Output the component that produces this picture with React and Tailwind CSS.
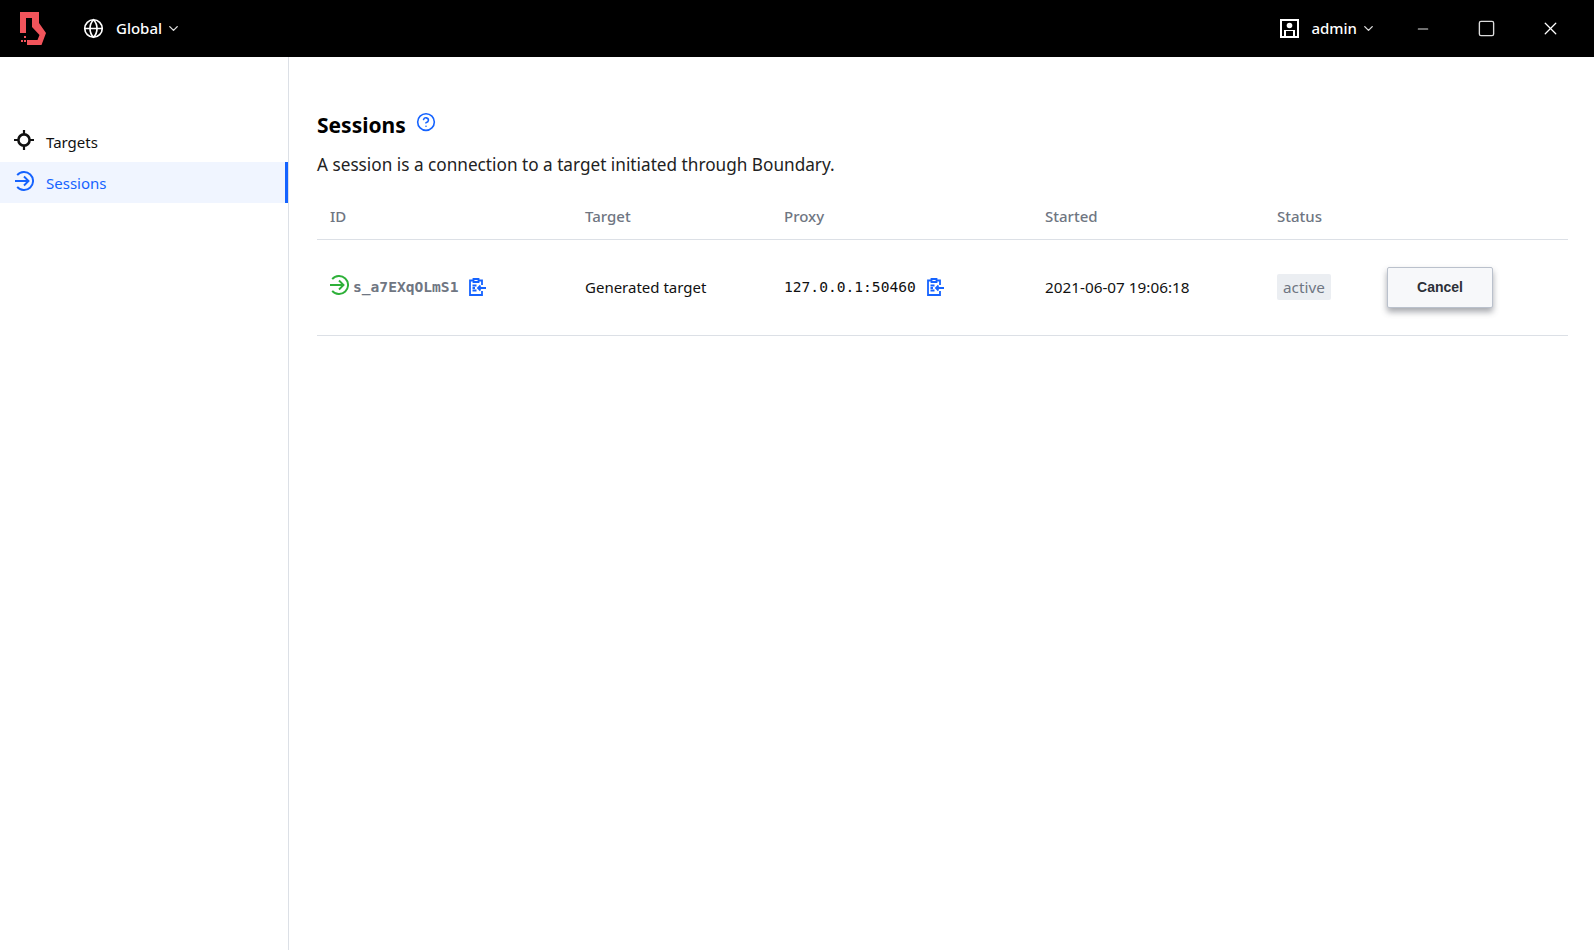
import { ChevronDown, Globe, CircleHelp, Minus, Square, X } from 'lucide-react';

const uiFont = 'font-["Noto_Sans",sans-serif]';
const monoFont = 'font-["DejaVu_Sans_Mono",monospace]';

function Logo() {
  return (
    <svg width="26" height="33" viewBox="0 0 26 33" fill="none">
      <path
        d="M0 0H19V11L26 21L21.5 33H7V28H17.5L19.5 23L12 15V6H6V21H0Z"
        fill="#f2545b"
      />
      <rect x="4" y="24" width="2" height="2" fill="#f2545b" />
      <rect x="1" y="28" width="2" height="2" fill="#f2545b" />
      <rect x="4" y="28" width="2" height="2" fill="#f2545b" />
    </svg>
  );
}

function UserIcon() {
  return (
    <svg width="19" height="19" viewBox="0 0 19 19">
      <path fillRule="evenodd" d="M0 0H19V19H0ZM2 2V17H4V11H15V17H17V2Z" fill="#fff" />
      <circle cx="9.5" cy="6.5" r="2.8" fill="#fff" />
      <rect x="6" y="12" width="7" height="5" fill="#000" />
    </svg>
  );
}

function TargetIcon({ className }) {
  return (
    <svg width="20" height="20" viewBox="0 0 20 20" fill="none" stroke="currentColor" strokeWidth="2.6" className={className}>
      <circle cx="10" cy="10" r="5.6" />
      <path d="M10 0V5M10 15V20M0 10H5M15 10H20" strokeWidth="2.2" />
    </svg>
  );
}

function SessionIcon({ className }) {
  return (
    <svg width="20" height="20" viewBox="0 0 20 20" fill="none" stroke="currentColor" strokeWidth="1.9" className={className}>
      <path d="M3.2 4.2A9 9 0 1 1 3.2 15.8" />
      <path d="M1 10H14.5M10 5.5L14.5 10L10 14.5" />
    </svg>
  );
}

function CopyIcon() {
  return (
    <svg width="17" height="18" viewBox="0 0 17 18" fill="none" stroke="#1563ff" strokeWidth="1.8">
      <path d="M4.5 2.5H1V17H13V13M10 2.5H13V7" />
      <path d="M4.5 1H9.5V4H4.5Z" />
      <path d="M3.5 7.5H7.5M3.5 10H6M3.5 12.5H7.5M17 10H9M11.5 7.5L9 10L11.5 12.5" />
    </svg>
  );
}

function NavItem({ icon: Icon, active, children }) {
  return (
    <div
      className={`flex h-[41px] items-center border-r-[3px] pl-[14px] ${
        active ? 'border-[#1563ff] bg-[#f0f5ff] text-[#1563ff]' : 'border-transparent text-[#111]'
      }`}
    >
      <Icon className="-mt-1" />
      <span className="ml-[12px] pt-[2px] text-[15px]">{children}</span>
    </div>
  );
}

const headers = [
  ['ID', 'w-[268px] pl-[13px]'],
  ['Target', 'w-[199px]'],
  ['Proxy', 'w-[261px]'],
  ['Started', 'w-[232px]'],
  ['Status', 'w-[110px]'],
  ['', ''],
];

export default function App() {
  return (
    <div className={`flex h-[950px] flex-col bg-white ${uiFont}`}>
      <header className="flex h-[57px] shrink-0 items-center bg-black text-white">
        <div className="ml-[20px] w-[26px]">
          <Logo />
        </div>
        <Globe size={21} strokeWidth={1.9} className="ml-[37px]" />
        <span className="ml-[12px] text-[15px] font-medium">Global</span>
        <ChevronDown size={15} strokeWidth={2.2} className="ml-[4px] text-[#ddd]" />
        <div className="ml-auto flex items-center">
          <UserIcon />
          <span className="ml-[12px] text-[15px] font-medium">admin</span>
          <ChevronDown size={15} strokeWidth={2.2} className="ml-[4px] text-[#ddd]" />
          <Minus size={16} strokeWidth={1.8} className="ml-[39px] text-[#ddd]" />
          <Square size={19} strokeWidth={1.7} className="ml-[46px] text-[#ddd]" />
          <X size={21} strokeWidth={1.5} className="ml-[44px] mr-[33px]" />
        </div>
      </header>

      <div className="flex min-h-0 flex-1">
        <aside className="w-[289px] shrink-0 border-r border-[#dce0e6] pt-[64px]">
          <NavItem icon={TargetIcon}>Targets</NavItem>
          <NavItem icon={SessionIcon} active>
            Sessions
          </NavItem>
        </aside>

        <main className="min-w-0 flex-1 pl-[28px] pr-[26px] pt-[53px]">
          <div className="flex items-start">
            <h1 className="text-[21px] font-bold leading-[30px] text-black">Sessions</h1>
            <CircleHelp size={20} strokeWidth={1.9} className="ml-[10px] mt-[2px] text-[#1563ff]" />
          </div>
          <p className="mt-[13px] text-[17.2px] leading-[24px] text-[#222]">
            A session is a connection to a target initiated through Boundary.
          </p>

          <table className="mt-[19px] w-full table-fixed border-collapse">
            <thead>
              <tr className="h-[43px] border-b border-[#dce0e6]">
                {headers.map(([label, cls]) => (
                  <th key={label} className={`pb-[2px] text-left text-[15px] font-medium text-[#6f7682] ${cls}`}>
                    {label}
                  </th>
                ))}
              </tr>
            </thead>
            <tbody>
              <tr className="h-[96px] border-b border-[#dce0e6] text-[15px] text-[#111]">
                <td className="pl-[13px]">
                  <div className="flex items-center">
                    <SessionIcon className="-mt-1 -ml-[1px] text-[#2eb039]" />
                    <span className={`ml-[4px] text-[14.6px] font-bold text-[#6f7682] ${monoFont}`}>s_a7EXqOLmS1</span>
                    <span className="ml-[11px]">
                      <CopyIcon />
                    </span>
                  </div>
                </td>
                <td>Generated target</td>
                <td>
                  <div className="flex items-center">
                    <span className={`text-[14.6px] ${monoFont}`}>127.0.0.1:50460</span>
                    <span className="ml-[11px]">
                      <CopyIcon />
                    </span>
                  </div>
                </td>
                <td className="text-[15.3px]">2021-06-07 19:06:18</td>
                <td>
                  <span className="inline-block rounded-[2px] bg-[#ebeef2] px-[6px] py-[2px] text-[15.3px] text-[#6f7682]">active</span>
                </td>
                <td>
                  <button className="h-[41px] w-[106px] rounded-[2px] border border-[#bac1cc] bg-[#f7f8fa] font-['Liberation_Sans',sans-serif] text-[14px] font-bold text-[#2c3038] shadow-[0_4px_6px_rgba(60,65,75,0.45)]">
                    Cancel
                  </button>
                </td>
              </tr>
            </tbody>
          </table>
        </main>
      </div>
    </div>
  );
}
